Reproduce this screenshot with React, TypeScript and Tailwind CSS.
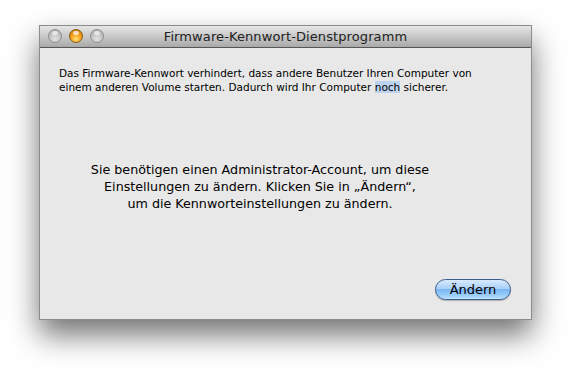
import React from "react";

function Light({ color }: { color: "gray" | "orange" }) {
  if (color === "orange") {
    return (
      <div className="w-[14px] h-[14px] rounded-full border border-[#8a5a10] bg-[radial-gradient(circle_at_50%_75%,#ffe27a_0%,#f7a21c_45%,#c56a08_100%)] relative">
        <div className="absolute left-[3px] top-[1px] w-[6px] h-[4px] rounded-full bg-white/70" />
      </div>
    );
  }
  return (
    <div className="w-[14px] h-[14px] rounded-full border border-[#8e8e8e] bg-[radial-gradient(circle_at_50%_75%,#e2e2e2_0%,#c4c4c4_50%,#a2a2a2_100%)] relative">
      <div className="absolute left-[3px] top-[1px] w-[6px] h-[4px] rounded-full bg-white/60" />
    </div>
  );
}

export default function App() {
  return (
    <div className="w-[572px] h-[375px] bg-white pl-[39px] pt-[25px] overflow-hidden" style={{ fontFamily: '"DejaVu Sans", sans-serif' }}>
      <div className="w-[493px] h-[295px] flex flex-col bg-[#e8e8e8] border border-[#8c8c8c] shadow-[0_15px_28px_rgba(0,0,0,0.55)]">
        <div className="h-[22px] shrink-0 relative flex items-center justify-center bg-[linear-gradient(#e6e6e6,#a9a9a9)] border-b border-[#565656]">
          <div className="absolute left-[8px] top-[3px] flex gap-[7px]">
            <Light color="gray" />
            <Light color="orange" />
            <Light color="gray" />
          </div>
          <span className="text-[13px] text-[#222] tracking-[0.1px]">Firmware-Kennwort-Dienstprogramm</span>
        </div>
        <div className="flex-1 flex flex-col px-[19px] pt-[18px] pb-[19px]">
          <p className="text-[10.5px] leading-[14px] text-black">
            Das Firmware-Kennwort verhindert, dass andere Benutzer Ihren Computer von
            <br />
            einem anderen Volume starten. Dadurch wird Ihr Computer{" "}
            <span className="bg-[#bcd3ef]">noch</span> sicherer.
          </p>
          <div className="mt-[67px] w-[402px] text-center text-[12.7px] leading-[17px] text-black">
            Sie benötigen einen Administrator-Account, um diese
            <br />
            Einstellungen zu ändern. Klicken Sie in „Ändern“,
            <br />
            um die Kennworteinstellungen zu ändern.
          </div>
          <div className="flex-1" />
          <div className="flex justify-end pr-[1px]">
            <button className="w-[76px] h-[21px] rounded-full border border-[#3a5f8e] text-[13px] text-black bg-[linear-gradient(#d9ebfd_0%,#a9d0f7_45%,#7ab6f2_50%,#9fd0fb_85%,#c6e6ff_100%)] shadow-[0_1px_1px_rgba(0,0,0,0.25)] leading-none">
              Ändern
            </button>
          </div>
        </div>
      </div>
    </div>
  );
}
